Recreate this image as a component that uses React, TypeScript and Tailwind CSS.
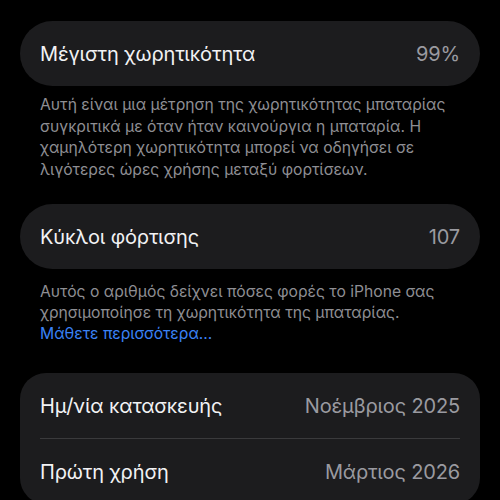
import React from "react";

const font = { fontFamily: "Inter, 'Noto Sans', sans-serif" };

function Row({ label, value }: { label: string; value: string }) {
  return (
    <div className="flex h-[65px] items-center justify-between px-5">
      <span className="text-[20px] tracking-[-0.15px] text-[#f2f2f4]">{label}</span>
      <span className="text-[20px] tracking-[-0.15px] text-[#9a9aa0]">{value}</span>
    </div>
  );
}

export default function App() {
  return (
    <div className="h-[500px] w-[500px] overflow-hidden bg-black px-5 pt-[21px]" style={font}>
      <div className="rounded-full bg-[#1c1c1e]">
        <Row label="Μέγιστη χωρητικότητα" value="99%" />
      </div>
      <p className="mt-[8px] px-5 text-[15.7px] leading-[21.5px] text-[#8e8e93]">
        Αυτή είναι μια μέτρηση της χωρητικότητας μπαταρίας συγκριτικά με όταν ήταν
        καινούργια η μπαταρία. Η χαμηλότερη χωρητικότητα μπορεί να οδηγήσει σε
        λιγότερες ώρες χρήσης μεταξύ φορτίσεων.
      </p>

      <div className="mt-[24px] rounded-full bg-[#1c1c1e]">
        <Row label="Κύκλοι φόρτισης" value="107" />
      </div>
      <p className="mt-[12px] px-5 text-[15.7px] leading-[21px] text-[#8e8e93]">
        Αυτός ο αριθμός δείχνει πόσες φορές το iPhone σας χρησιμοποίησε τη
        χωρητικότητα της μπαταρίας.
        <br />
        <span className="text-[#3a82f6]">Μάθετε περισσότερα...</span>
      </p>

      <div className="mt-[29px] rounded-[26px] bg-[#1c1c1e]">
        <Row label="Ημ/νία κατασκευής" value="Νοέμβριος 2025" />
        <div className="mx-5 h-px bg-[#3a3a3c]" />
        <Row label="Πρώτη χρήση" value="Μάρτιος 2026" />
      </div>
    </div>
  );
}
